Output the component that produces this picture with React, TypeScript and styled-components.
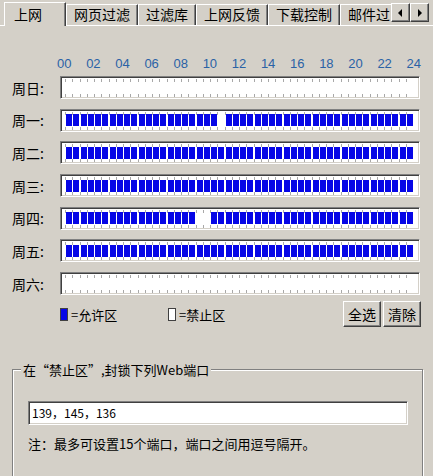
import * as React from "react";
import styled, { createGlobalStyle } from "styled-components";

const GlobalStyle = createGlobalStyle`
  html, body {
    margin: 0;
    padding: 0;
    background: #d4d0c8;
  }
  body {
    font-family: "Noto Sans CJK SC", "Liberation Sans", sans-serif;
    color: #000;
  }
`;

const Window = styled.div`
  width: 433px;
  height: 476px;
  overflow: hidden;
  background: #d4d0c8;
  display: flex;
  flex-direction: column;
`;

/* ---------- tab strip ---------- */

const TabStrip = styled.div`
  display: flex;
  align-items: flex-end;
  height: 26px;
  padding-left: 4px;
  box-shadow: inset 0 -1px 0 #fff;
  flex-shrink: 0;
`;

const TabList = styled.div`
  display: flex;
  align-items: flex-end;
  flex: 1;
  overflow: hidden;
  height: 100%;
`;

const Tab = styled.div<{ $active?: boolean }>`
  flex-shrink: 0;
  box-sizing: border-box;
  height: ${(p) => (p.$active ? 25 : 21)}px;
  width: ${(p) => (p.$active ? "62px" : "auto")};
  padding: ${(p) => (p.$active ? "2px 0 0 9px" : "0 7px")};
  margin-bottom: ${(p) => (p.$active ? "-1px" : "1px")};
  background: #d4d0c8;
  border-top: 1px solid #fff;
  border-left: 1px solid #fff;
  border-right: 1px solid #404040;
  box-shadow: inset -1px 0 0 #808080;
  font-size: 14px;
  line-height: 19px;
  white-space: nowrap;
  position: relative;
  z-index: ${(p) => (p.$active ? 1 : 0)};
`;

const ArrowGroup = styled.div`
  display: flex;
  flex-shrink: 0;
  align-self: flex-start;
  margin: 3px 4px 0 0;
`;

const ArrowButton = styled.div`
  width: 19px;
  height: 19px;
  box-sizing: border-box;
  background: #d4d0c8;
  border-top: 1px solid #fff;
  border-left: 1px solid #fff;
  border-right: 1px solid #404040;
  border-bottom: 1px solid #404040;
  box-shadow: inset -1px -1px 0 #808080;
  display: flex;
  align-items: center;
  justify-content: center;
`;

/* ---------- schedule ---------- */

const Panel = styled.div`
  display: flex;
  flex-direction: column;
  flex: 1;
`;

const HourAxis = styled.div`
  display: flex;
  justify-content: space-between;
  width: 364px;
  margin: 31px 0 0 57px;
`;

const HourLabel = styled.span`
  font-family: "Liberation Sans", Arial, sans-serif;
  font-size: 13px;
  line-height: 14px;
  color: #2a62a6;
`;

const Rows = styled.div`
  display: flex;
  flex-direction: column;
  gap: 9.7px;
  margin-top: 5px;
`;

const Row = styled.div`
  display: flex;
  align-items: center;
  height: 23px;
`;

const DayLabel = styled.div`
  width: 60px;
  flex-shrink: 0;
  padding-left: 12px;
  box-sizing: border-box;
  font-size: 14px;
  line-height: 16px;
`;

const Bar = styled.div`
  width: 360px;
  height: 23px;
  box-sizing: border-box;
  background: #fff;
  border-top: 1px solid #808080;
  border-left: 1px solid #808080;
  border-right: 1px solid #fff;
  border-bottom: 1px solid #fff;
  box-shadow: inset 1px 1px 0 #404040, inset -1px -1px 0 #d4d0c8;
  display: flex;
  padding: 0 5px 0 4px;
`;

const Cell = styled.div`
  width: 7.25px;
  flex-shrink: 0;
  height: 100%;
  display: flex;
  align-items: center;
  justify-content: center;
  background:
    linear-gradient(#a8a8a8, #a8a8a8) left 2px / 1px 3px no-repeat,
    linear-gradient(#a8a8a8, #a8a8a8) left calc(100% - 1px) / 1px 3px no-repeat;
`;

const Block = styled.div<{ $on: boolean }>`
  width: 6px;
  height: 12px;
  margin-left: 1px;
  background: ${(p) => (p.$on ? "#0606e6" : "transparent")};
`;

/* ---------- legend + buttons ---------- */

const LegendRow = styled.div`
  display: flex;
  align-items: center;
  height: 26px;
  margin: 6px 12px 0 60px;
`;

const LegendItem = styled.div`
  display: flex;
  align-items: center;
  gap: 3px;
  font-size: 13px;
  width: 108px;
`;

const Swatch = styled.span<{ $on: boolean }>`
  width: 8px;
  height: 13px;
  box-sizing: border-box;
  border: 1px solid #404040;
  background: ${(p) => (p.$on ? "#0606e6" : "#fff")};
`;

const ButtonGroup = styled.div`
  margin-left: auto;
  display: flex;
  gap: 2px;
`;

const Button = styled.div`
  width: 38px;
  height: 26px;
  box-sizing: border-box;
  border-top: 1px solid #fff;
  border-left: 1px solid #fff;
  border-right: 1px solid #404040;
  border-bottom: 1px solid #404040;
  box-shadow: inset -1px -1px 0 #808080;
  display: flex;
  align-items: center;
  justify-content: center;
  font-size: 14px;
`;

/* ---------- group box ---------- */

const GroupBox = styled.div`
  position: relative;
  margin: 42px 10px 0 12px;
  height: 130px;
  border: 1px solid #808080;
  box-shadow: inset 1px 1px 0 #fff, 1px 1px 0 #fff;
  padding: 31px 14px 0 15px;
  flex-shrink: 0;
`;

const GroupTitle = styled.span`
  position: absolute;
  top: -9px;
  left: 8px;
  padding: 0 2px;
  background: #d4d0c8;
  font-size: 13px;
  line-height: 17px;
  white-space: nowrap;
`;

const PortInput = styled.div`
  width: 380px;
  height: 24px;
  box-sizing: border-box;
  background: #fff;
  border-top: 1px solid #808080;
  border-left: 1px solid #808080;
  border-right: 1px solid #fff;
  border-bottom: 1px solid #fff;
  box-shadow: inset 1px 1px 0 #404040, inset -1px -1px 0 #d4d0c8;
  padding: 0 3px;
  font-size: 12px;
  line-height: 22px;
`;

const Note = styled.div`
  margin-top: 10px;
  font-size: 13px;
  line-height: 17px;
`;

const tabs = ["网页过滤", "过滤库", "上网反馈", "下载控制", "邮件过"];
const hours = ["00", "02", "04", "06", "08", "10", "12", "14", "16", "18", "20", "22", "24"];

const all = (on: boolean) => Array.from({ length: 48 }, () => on);
const except = (...off: number[]) => all(true).map((v, i) => (off.includes(i) ? false : v));

const schedule: { day: string; cells: boolean[] }[] = [
  { day: "周日", cells: all(false) },
  { day: "周一", cells: except(21) },
  { day: "周二", cells: all(true) },
  { day: "周三", cells: all(true) },
  { day: "周四", cells: except(18, 19) },
  { day: "周五", cells: all(true) },
  { day: "周六", cells: all(false) },
];

const Arrow = ({ dir }: { dir: "left" | "right" }) => (
  <svg width="5" height="8" viewBox="0 0 5 8">
    {dir === "left" ? <polygon points="4,0 4,8 0,4" fill="#000" /> : <polygon points="1,0 1,8 5,4" fill="#000" />}
  </svg>
);

export default function App() {
  return (
    <Window>
      <GlobalStyle />
      <TabStrip>
        <TabList>
          <Tab $active>上网</Tab>
          {tabs.map((t) => (
            <Tab key={t}>{t}</Tab>
          ))}
        </TabList>
        <ArrowGroup>
          <ArrowButton>
            <Arrow dir="left" />
          </ArrowButton>
          <ArrowButton>
            <Arrow dir="right" />
          </ArrowButton>
        </ArrowGroup>
      </TabStrip>

      <Panel>
        <HourAxis>
          {hours.map((h) => (
            <HourLabel key={h}>{h}</HourLabel>
          ))}
        </HourAxis>

        <Rows>
          {schedule.map((r) => (
            <Row key={r.day}>
              <DayLabel>{r.day}:</DayLabel>
              <Bar>
                {r.cells.map((on, i) => (
                  <Cell key={i}>
                    <Block $on={on} />
                  </Cell>
                ))}
              </Bar>
            </Row>
          ))}
        </Rows>

        <LegendRow>
          <LegendItem>
            <Swatch $on />=允许区
          </LegendItem>
          <LegendItem>
            <Swatch $on={false} />=禁止区
          </LegendItem>
          <ButtonGroup>
            <Button>全选</Button>
            <Button>清除</Button>
          </ButtonGroup>
        </LegendRow>

        <GroupBox>
          <GroupTitle>在“禁止区”,封锁下列Web端口</GroupTitle>
          <PortInput>139，145，136</PortInput>
          <Note>注：最多可设置15个端口，端口之间用逗号隔开。</Note>
        </GroupBox>
      </Panel>
    </Window>
  );
}
